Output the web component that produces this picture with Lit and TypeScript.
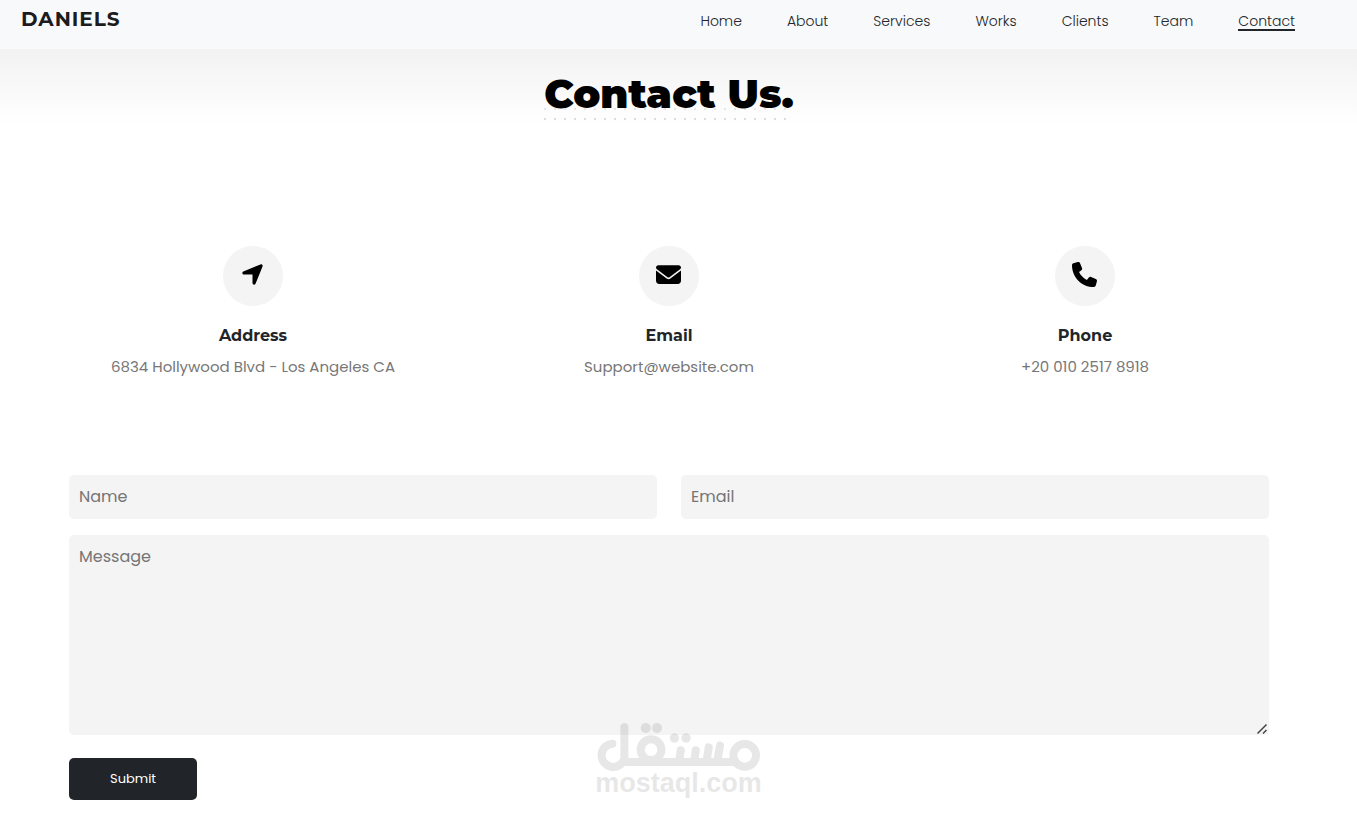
import { LitElement, html, css, svg } from "lit";
import { customElement, property } from "lit/decorators.js";
import { classMap } from "lit/directives/class-map.js";

const BODY = css`Poppins, Inter, "Open Sans", sans-serif`;
const HEAD = css`Montserrat, Inter, "Open Sans", sans-serif`;

const ARROW = svg`<path transform="translate(32 0)" d="M429.6 92.1c4.9-11.9 2.1-25.6-7-34.7s-22.8-11.9-34.7-7l-352 144c-14.2 5.8-22.2 20.8-19.3 35.8s16.1 25.8 31.4 25.8H224V432c0 15.3 10.8 28.4 25.8 31.4s30-5.1 35.8-19.3l144-352z"/>`;
const ENVELOPE = svg`<path d="M48 64C21.5 64 0 85.5 0 112c0 15.1 7.1 29.3 19.2 38.4L236.8 313.6c11.4 8.5 27 8.5 38.4 0L492.8 150.4c12.1-9.1 19.2-23.3 19.2-38.4c0-26.5-21.5-48-48-48H48zM0 176V384c0 35.3 28.7 64 64 64H448c35.3 0 64-28.7 64-64V176L294.4 339.2c-22.8 17.1-54 17.1-76.8 0L0 176z"/>`;
const PHONE = svg`<path d="M164.9 24.6c-7.7-18.6-28-28.5-47.4-23.2l-88 24C12.1 30.2 0 46 0 64C0 311.4 200.6 512 448 512c18 0 33.8-12.1 38.6-29.5l24-88c5.3-19.4-4.6-39.7-23.2-47.4l-96-40c-16.3-6.8-35.2-2.1-46.3 11.6L304.7 368C234.3 334.7 177.3 277.7 144 207.3L193.3 167c13.7-11.2 18.4-30 11.6-46.3l-40-96z"/>`;

const LINKS = ["Home", "About", "Services", "Works", "Clients", "Team", "Contact"];

@customElement("site-header")
class SiteHeader extends LitElement {
  @property() current = "Contact";

  static styles = css`
    :host {
      display: block;
    }
    .bar {
      display: flex;
      justify-content: space-between;
      align-items: flex-start;
      padding: 4px 62px 15px 21px;
      background: #f8f9fb;
    }
    .brand {
      font: 700 20px/30px ${HEAD};
      letter-spacing: 1px;
      color: #1b1c1e;
      text-decoration: none;
    }
    .links {
      display: flex;
      gap: 45px;
      margin: 0;
      padding: 6px 0 0;
      list-style: none;
    }
    .link {
      display: block;
      font: 300 14px/22px ${BODY};
      color: #212529;
      text-decoration: none;
      border-bottom: 2px solid transparent;
      height: 19px;
    }
    .active {
      border-color: #212529;
    }
  `;

  render() {
    return html`<header class="bar">
      <a class="brand" href="#">DANIELS</a>
      <nav>
        <ul class="links">
          ${LINKS.map(
            (l) => html`<li>
              <a class=${classMap({ link: true, active: l === this.current })} href="#${l.toLowerCase()}">${l}</a>
            </li>`
          )}
        </ul>
      </nav>
    </header>`;
  }
}

@customElement("contact-info")
class ContactInfo extends LitElement {
  @property() label = "";
  @property() value = "";
  @property({ attribute: false }) icon: unknown;

  static styles = css`
    :host {
      display: flex;
      flex-direction: column;
      align-items: center;
      text-align: center;
    }
    .disc {
      display: flex;
      width: 60px;
      height: 60px;
      box-sizing: border-box;
      padding: 16px 0 0 17px;
      border-radius: 50%;
      background: #f4f4f4;
    }
    .icon {
      width: 25px;
      height: 25px;
    }
    .label {
      margin: 20px 0 0;
      font: 700 16px/20px ${HEAD};
      color: #212529;
    }
    .value {
      margin: 9px 0 0;
      font: 400 15px/24px ${BODY};
      color: #777;
    }
  `;

  render() {
    return html`<div class="disc">
        <svg class="icon" viewBox="0 0 512 512" aria-hidden="true">${this.icon}</svg>
      </div>
      <h3 class="label">${this.label}</h3>
      <p class="value">${this.value}</p>`;
  }
}

@customElement("contact-form")
class ContactForm extends LitElement {
  static styles = css`
    .form {
      display: grid;
      grid-template-columns: 1fr 1fr;
      column-gap: 24px;
      row-gap: 16px;
    }
    .field {
      display: block;
      width: 100%;
      box-sizing: border-box;
      padding: 10px;
      border: 0;
      border-radius: 5px;
      background: #f4f4f4;
      font: 400 16px/24px ${BODY};
      color: #212529;
    }
    .field::placeholder {
      color: #757575;
    }
    .message {
      grid-column: 1 / -1;
      height: 200px;
      resize: both;
    }
    .message::-webkit-resizer {
      background: url("data:image/svg+xml,%3Csvg xmlns='http://www.w3.org/2000/svg' width='15' height='15'%3E%3Cpath d='M3.5 13.5l9-9M9 13.5l3.500-3.500' stroke='%23444' stroke-width='1.500' fill='none'/%3E%3C/svg%3E")
        no-repeat;
    }
    .submit {
      justify-self: start;
      margin-top: 7px;
      padding: 11px 41px;
      border: 0;
      border-radius: 5px;
      background: #212529;
      color: #fff;
      font: 400 13px/20px ${BODY};
    }
  `;

  render() {
    return html`<form class="form">
      <input class="field" type="text" aria-label="Name" placeholder="Name" />
      <input class="field" type="email" aria-label="Email" placeholder="Email" />
      <textarea class="field message" aria-label="Message" placeholder="Message"></textarea>
      <button class="submit" type="submit">Submit</button>
    </form>`;
  }
}

@customElement("mostaql-mark")
class MostaqlMark extends LitElement {
  static styles = css`
    :host {
      display: flex;
      flex-direction: column;
      align-items: center;
      opacity: 0.09;
      pointer-events: none;
    }
    .logo {
      width: 164px;
      height: 50px;
    }
    .name {
      font: 700 27px/22px "Liberation Sans", Arial, sans-serif;
      color: #000;
    }
  `;

  render() {
    return html`<svg class="logo" viewBox="52 36 488 150" aria-hidden="true">
        <g fill="none" stroke="#000" stroke-width="24" stroke-linecap="round">
          <path d="M97 101 A35 35 0 1 0 133 146 V52" />
          <path d="M133 156 H462" />
          <circle cx="213" cy="119" r="31" />
          <circle cx="494" cy="136" r="34" />
          <path d="M302 121 L298 150 M347 121 L343 150 M386 112 L380 150 M420 107 L412 150" />
        </g>
        <circle cx="197" cy="54" r="15" />
        <circle cx="231" cy="54" r="15" />
        <circle cx="283" cy="84" r="14" />
        <circle cx="318" cy="84" r="14" />
      </svg>
      <span class="name">mostaql.com</span>`;
  }
}

@customElement("app-root")
class AppRoot extends LitElement {
  static styles = css`
    :host {
      display: block;
      position: relative;
      min-height: 100vh;
      background: #fff;
    }
    .main {
      padding: 24px 88px 14px 69px;
      background: linear-gradient(#f2f2f2, #fff 76px);
    }
    .title {
      --dot: radial-gradient(circle at 1px 6px, #ddd 1px, transparent 1px);
      --faint: radial-gradient(circle at 1px 6px, #e6e6e6 1px, transparent 1px);
      width: fit-content;
      margin: 0 auto;
      padding-bottom: 8px;
      font: 900 40px/42px ${HEAD};
      color: #000;
      background:
        var(--dot) 0 100% / 10px 10px repeat-x,
        var(--faint) 0 30px / 10px 10px repeat-x;
    }
    .infos {
      display: grid;
      grid-template-columns: repeat(3, 1fr);
      gap: 48px;
      margin: 123px 0 96px;
    }
    .mark {
      position: absolute;
      left: 50%;
      bottom: 20px;
      transform: translateX(-50%);
    }
  `;

  render() {
    return html`<site-header></site-header>
      <main class="main">
        <h1 class="title">Contact Us.</h1>
        <section class="infos">
          <contact-info label="Address" value="6834 Hollywood Blvd - Los Angeles CA" .icon=${ARROW}></contact-info>
          <contact-info label="Email" value="Support@website.com" .icon=${ENVELOPE}></contact-info>
          <contact-info label="Phone" value="+20 010 2517 8918" .icon=${PHONE}></contact-info>
        </section>
        <contact-form></contact-form>
      </main>
      <mostaql-mark class="mark"></mostaql-mark>`;
  }
}
